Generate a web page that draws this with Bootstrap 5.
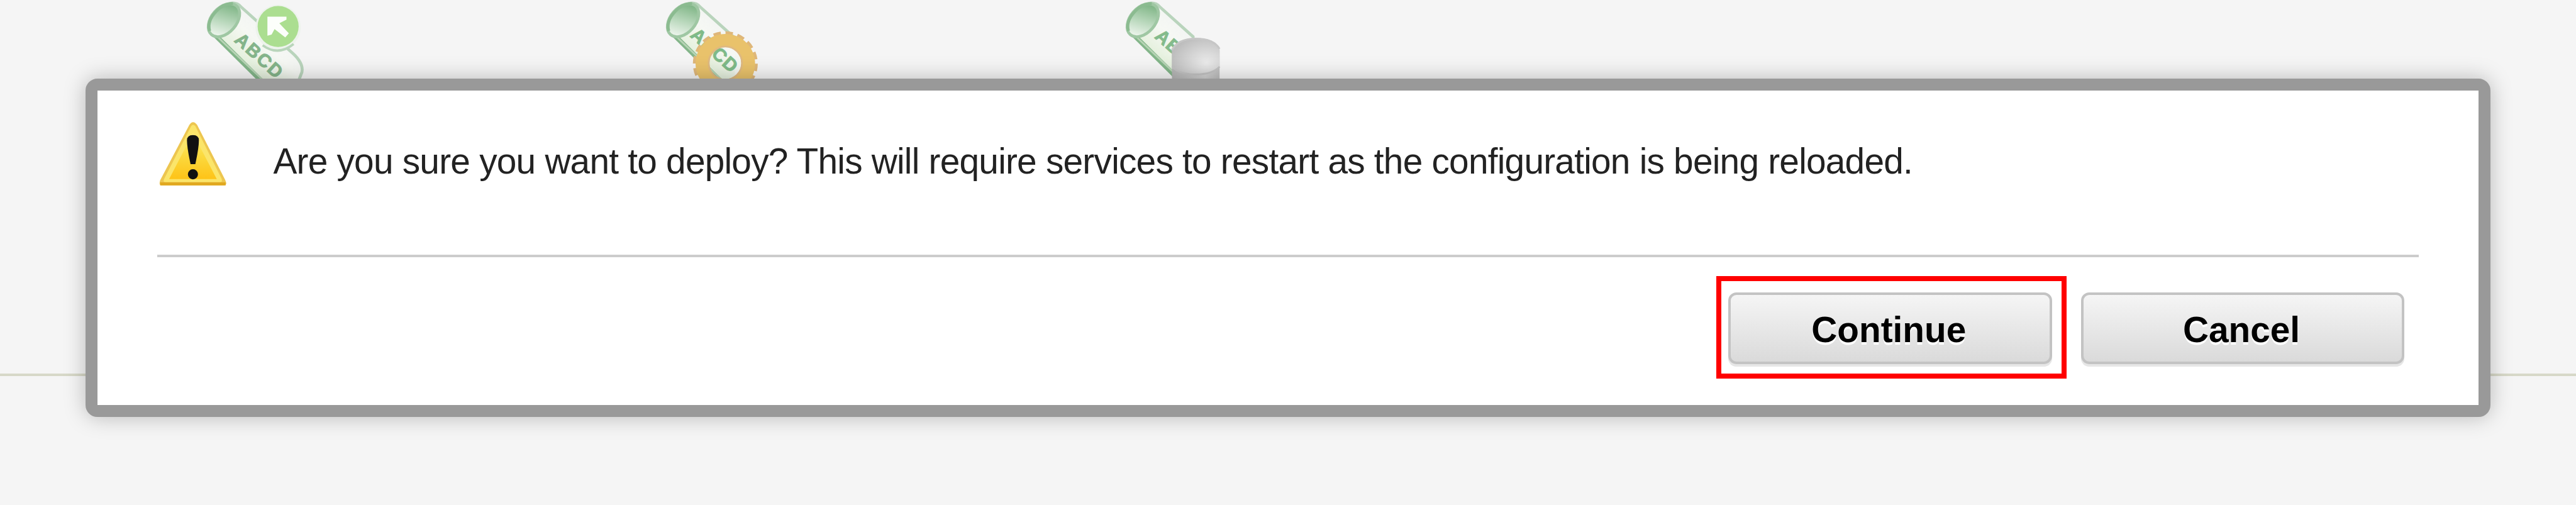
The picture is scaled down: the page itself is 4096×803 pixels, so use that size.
<!DOCTYPE html>
<html lang="en">
<head>
<meta charset="utf-8">
<title>Deploy</title>
<link href="https://cdn.jsdelivr.net/npm/bootstrap@5.3.0/dist/css/bootstrap.min.css" rel="stylesheet">
<style>
  :root { --u: .9464px; }
  body { height: 803px; background: #f5f5f5; font-family: "Liberation Sans", Arial, sans-serif; }
  .tools { height: calc(628 * var(--u)); padding-left: calc(341 * var(--u)); gap: calc(532 * var(--u)); border-bottom: 4px solid #d7d8c8; box-sizing: content-box; }
  .tools svg { width: calc(240 * var(--u)); height: calc(180 * var(--u)); flex: none; }
  .prompt { top: 125px; left: calc(144 * var(--u)); width: calc(4040 * var(--u)); height: 538px;
    border: 19px solid #999; border-radius: 19px; padding: 0 calc(100 * var(--u));
    box-shadow: 0 0 34px rgba(0,0,0,.25); background: #fff; background-clip: padding-box; }
  .message { height: 265px; border-bottom: 4px solid #ccc; }
  .message svg { width: calc(120 * var(--u)); height: calc(120 * var(--u)); margin-top: calc(50 * var(--u)); flex: none; }
  .message p { margin: calc(84 * var(--u)) 0 0 calc(75 * var(--u)); font-size: calc(60 * var(--u)); line-height: calc(72 * var(--u)); letter-spacing: -.762px; color: #222; white-space: nowrap; }
  .actions { padding: 30px calc(24 * var(--u)) 0 0; gap: calc(24 * var(--u)); }
  .marked { border: 8px solid #f00; padding: 18px calc(16 * var(--u)) 15px calc(12 * var(--u)); height: 163px; }
  .actions .btn { width: calc(544 * var(--u)); height: 114px; border: 4px solid #c3c3c3; border-radius: 13px; padding: 4px 4px 0 0;
    background: linear-gradient(#f5f5f5, #dadada); box-shadow: 0 4px 0 #e6e6e6; color: #000;
    font-size: calc(60 * var(--u)); line-height: 104px; text-shadow: 0 4px 0 #fff; }
  .cancel { margin-top: 26px; }
</style>
</head>
<body class="position-relative overflow-hidden">
<main class="tools d-flex align-items-start">
  <svg viewBox="0 0 240 180" aria-hidden="true">
    <defs>
      <linearGradient id="mouth" x1="1" y1=".3" x2="0" y2=".6"><stop offset="0" stop-color="#77b07e"/><stop offset=".55" stop-color="#b9d8bc"/><stop offset="1" stop-color="#f1f7f0"/></linearGradient>
      <linearGradient id="paper" x1=".35" y1=".65" x2=".65" y2=".35"><stop offset="0" stop-color="#e6f1df"/><stop offset=".6" stop-color="#f6f8f4"/><stop offset="1" stop-color="#f3f5f3"/></linearGradient>
      <g id="roll">
        <path d="M12 52 8 44Q8 22 32 8 48 2 60 9L152 90Q171 108 166 124L160 140 102 140Z" fill="url(#paper)"/>
        <path d="M44 6Q56 3 63 11L150 89Q169 106 166 121L158 142" fill="none" stroke="#b9d4bc" stroke-width="5"/>
        <path d="M11 50 106 144" fill="none" stroke="#83b589" stroke-width="8"/>
        <path d="M18 56 104 138" fill="none" stroke="#b7d4b5" stroke-width="3"/>
        <ellipse cx="35" cy="34" rx="32" ry="21" transform="rotate(-49 35 34)" fill="url(#mouth)" stroke="#9fc7a3" stroke-width="5"/>
        <path d="M11 52Q6 36 22 19 34 6 50 6" fill="none" stroke="#8bbb90" stroke-width="5"/>
      </g>
      <clipPath id="cut"><rect width="122" height="180"/></clipPath>
      <radialGradient id="steel" cx=".72" cy=".68" r=".75"><stop offset="0" stop-color="#ebebeb"/><stop offset=".5" stop-color="#d4d4d4"/><stop offset="1" stop-color="#bdbdbd"/></radialGradient>
      <linearGradient id="side"><stop offset="0" stop-color="#b5b5b5"/><stop offset=".7" stop-color="#d2d2d2"/><stop offset="1" stop-color="#bebebe"/></linearGradient>
      <mask id="hole" maskUnits="userSpaceOnUse" x="0" y="0" width="240" height="180"><rect width="240" height="180" fill="#fff"/><circle cx="106" cy="106" r="27" fill="#000"/></mask>
      <linearGradient id="amber" x1="0" y1="0" x2="0" y2="1"><stop offset="0" stop-color="#fff08a"/><stop offset=".15" stop-color="#ffe95f"/><stop offset=".5" stop-color="#fbd93e"/><stop offset="1" stop-color="#fec317"/></linearGradient>
    </defs>
    <use href="#roll"/>
    <text transform="translate(94 93) rotate(42)" y="11" text-anchor="middle" font-size="31" font-weight="700" fill="#84b48a" stroke="#84b48a" textLength="96">ABCD</text>
    <circle cx="126" cy="46" r="38" fill="#edf3ec"/>
    <path d="M100 76Q126 95 152 74" fill="none" stroke="#b9d5bb" stroke-width="4"/>
    <circle cx="126" cy="44.500" r="34.500" fill="#abde90"/>
    <path d="M108 28H140V33L128 39 144 56 138 63 120 49 115 58 108 60Z" fill="#fcfefb"/>
  </svg>
  <svg viewBox="0 0 240 180" aria-hidden="true">
    <circle cx="106" cy="106" r="28" fill="#f4f7f2"/>
    <use href="#roll" clip-path="url(#cut)"/>
    <text transform="translate(88 84) rotate(42)" y="11" text-anchor="middle" font-size="31" font-weight="700" fill="#7fba88" stroke="#7fba88" textLength="94">ABCD</text>
    <g mask="url(#hole)">
      <circle cx="106" cy="107" r="50" fill="none" stroke="#dfb77a" stroke-width="9" stroke-dasharray="12 7.630"/>
      <circle cx="106" cy="107" r="50" fill="#e9c26b"/>
    </g>
    <circle cx="106" cy="106" r="28" fill="none" stroke="#dfb981" stroke-width="3"/>
  </svg>
  <svg viewBox="0 0 240 180" aria-hidden="true">
    <use href="#roll" clip-path="url(#cut)"/>
    <text transform="translate(96 86) rotate(42)" y="11" text-anchor="middle" font-size="31" font-weight="700" fill="#84bb8c" stroke="#84bb8c" textLength="94">ABCD</text>
    <path d="M84 84H164V160H84Z" fill="url(#side)"/>
    <path d="M84 84Q94 64 124 64T164 80V112Q152 125 124 125T84 112Z" fill="url(#steel)"/>
    <path d="M84 112Q96 125 124 125T164 112" fill="none" stroke="#c2c2c2" stroke-width="3"/>
    <path d="M84 84Q94 65 124 65T164 82" fill="none" stroke="#c6c6c6" stroke-width="3"/>
  </svg>
</main>

<section class="prompt position-absolute" role="dialog" aria-label="Confirm deploy">
  <div class="message d-flex align-items-start">
    <svg viewBox="264 202 120 120" aria-hidden="true">
      <path d="M318 210Q324 201 331 210L378 302Q383 312 375 312H272Q266 312 269 303Z" fill="#edc650"/>
      <path d="M321 212Q324 208 328 212L372 300Q374 306 370 306H277Q273 306 276 300Z" fill="#fbe56a"/>
      <path d="M324 224 364 301H284Z" fill="url(#amber)"/>
      <path d="M269 309H379" stroke="#e1a820" stroke-width="5"/>
      <path d="M314 236Q314 227 324 227T334 236Q334 248 328 276H320Q314 248 314 236Z" fill="#111"/>
      <circle cx="324" cy="293" r="8.500" fill="#111"/>
    </svg>
    <p>Are you sure you want to deploy? This will require services to restart as the configuration is being reloaded.</p>
  </div>
  <div class="actions d-flex justify-content-end align-items-start">
    <div class="marked"><button type="button" class="btn fw-bold d-block">Continue</button></div>
    <button type="button" class="btn fw-bold cancel">Cancel</button>
  </div>
</section>
<script src="https://cdn.jsdelivr.net/npm/bootstrap@5.3.0/dist/js/bootstrap.bundle.min.js"></script>
</body>
</html>
